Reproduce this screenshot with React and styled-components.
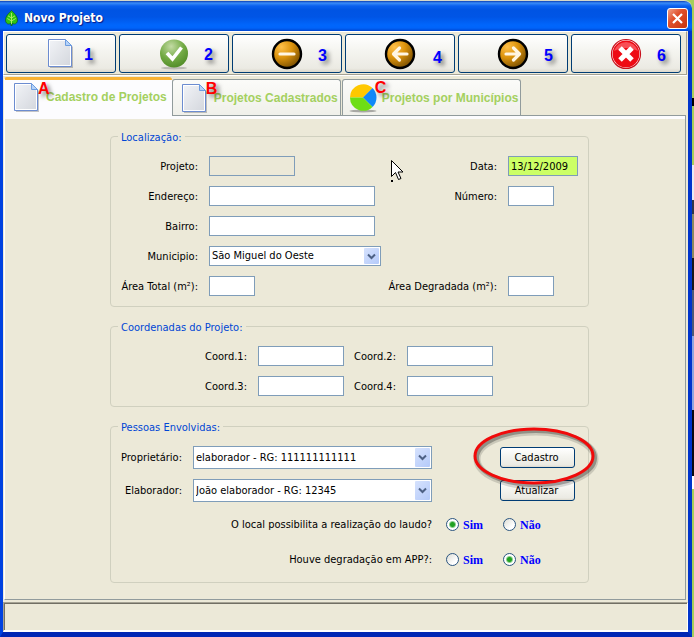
import React, { useState } from "react";
import styled, { createGlobalStyle, css } from "styled-components";

const color = {
  face: "#ece9d8",
  line: "#919b9c",
  group: "#d0d0bf",
  field: "#7f9db9",
  frame: "#0042e0",
  button: "#003c74",
};

const GlobalStyle = createGlobalStyle`
  *, *::before, *::after { box-sizing: border-box; }
  body {
    margin: 0;
    font: 11px/14px "DejaVu Sans Condensed", "DejaVu Sans", sans-serif;
    color: #000;
  }
  button, input, select { font: inherit; color: inherit; }
`;

const Desktop = styled.div`
  display: flex;
  min-height: 100vh;
  padding-right: 2px;
  background: linear-gradient(
    #a4cf5c 0 98px, #000 98px 106px, #a4cf5c 106px 165px, #e8ecf4 165px 200px,
    #30364a 200px 214px, #8a8a60 214px 258px, #17181c 258px 290px,
    #4c5a78 290px 336px, #8ea6e0 336px 410px, #0a0a12 410px 476px,
    #fff 476px 489px, #a4cf5c 489px
  );
`;

const Window = styled.div`
  flex: 1;
  min-width: 0;
  display: flex;
  flex-direction: column;
`;

const TitleBar = styled.header`
  display: flex;
  align-items: center;
  height: 31px;
  padding: 4px 4px 0 5px;
  border-top: 1px solid #d6d8c8;
  border-radius: 0 8px 0 0;
  background: linear-gradient(
    #0a3fb5 0, #3a8cf8 2px, #0a60ee 5px, #0054e3 9px, #0055e6 16px,
    #0066fc 24px, #0064fa 27px, #0046d0 30px
  );
`;

const Title = styled.h1`
  flex: 1;
  margin: 0 0 0 6px;
  font-size: 12px;
  line-height: 16px;
  font-weight: 700;
  color: #fff;
  text-shadow: 1px 1px 1px #0a1883;
`;

const CloseButton = styled.button`
  display: grid;
  place-items: center;
  width: 21px;
  height: 21px;
  padding: 0;
  border: 1px solid #fff;
  border-radius: 3px;
  background: linear-gradient(135deg, #f0a088, #e0502c 40%, #c8340c);
`;

const Body = styled.main`
  flex: 1;
  display: flex;
  flex-direction: column;
  border: solid ${color.frame};
  border-width: 0 4px 5px 3px;
  border-right-color: #0034cc;
  border-bottom-color: #0026b4;
  background: ${color.face};
`;

const Toolbar = styled.div`
  display: grid;
  grid-template-columns: repeat(6, 1fr);
  gap: 3px;
  padding: 2px 5px 1px 2px;
  border: 1px solid #fff;
  border-bottom: 1px solid #a5a294;
  border-right: 1px solid #a5a294;
  box-shadow: 0 1px #fff;
  margin: 0 1px 1px 0;
`;

const xpButton = css`
  border: 1px solid ${color.button};
  border-radius: 3px;
  background: linear-gradient(#fff, #f4f4ef 45%, #ebeae3 90%, #dcd8cc);
`;

const ToolButton = styled.button`
  ${xpButton}
  position: relative;
  display: grid;
  place-items: center;
  height: 39px;
  padding: 0;
`;

const Mark = styled.span`
  position: absolute;
  left: ${(p) => p.$left}px;
  top: ${(p) => p.$top}px;
  font: 700 16px/16px "Liberation Sans", Arial, sans-serif;
  color: ${(p) => (p.$letter ? "#f00" : "#00f")};
  text-shadow: 3px 3px 4px rgba(0, 0, 0, 0.5);
  pointer-events: none;
`;

const Tabs = styled.div`
  display: flex;
  align-items: flex-end;
  height: 39px;
  padding-left: 1px;
`;

const Tab = styled.button`
  position: relative;
  display: flex;
  align-items: center;
  gap: 5px;
  height: 36px;
  margin-right: 1px;
  padding: 1px 2px 0 ${(p) => p.$inset}px;
  border: 1px solid ${color.line};
  border-bottom: 0;
  border-radius: 3px 3px 0 0;
  background: linear-gradient(#fbfbf9, #f0f0ea);
  font: 700 12px/14px "Liberation Sans", Arial, sans-serif;
  color: #a4d060;
  white-space: nowrap;
  ${(p) =>
    p.$active &&
    css`
      z-index: 1;
      height: 39px;
      margin: 0 0 -1px;
      padding: 0 5px 2px ${p.$inset}px;
      border-top: 3px solid #f9b233;
      border-left-color: #fff;
      border-right-width: 0;
      background: #fcfcfe;
    `}
`;

const Pane = styled.form`
  flex: 1;
  display: flex;
  flex-direction: column;
  gap: 12px;
  margin: 0 2px 0 1px;
  padding: 13px 96px 16px 105px;
  border: 1px solid ${color.line};
  border-left-color: #fff;
  box-shadow: inset 0 3px #fcfcfe;
`;

const Group = styled.fieldset`
  min-width: 0;
  margin: 0;
  padding: 13px 0 10px;
  border: 1px solid ${color.group};
  border-radius: 4px;
`;

const Legend = styled.legend`
  height: 14px;
  margin-left: 7px;
  padding: 0 3px;
  line-height: 18px;
  color: #0046d5;
`;

const Fields = styled.div`
  position: relative;
  display: grid;
  grid-template-columns: ${(p) => p.$columns};
  grid-auto-rows: ${(p) => p.$row || 20}px;
  gap: 10px 11px;
  align-items: center;
  padding-right: ${(p) => p.$right || 0}px;

  & + & { margin-top: 10px; }
`;

const Label = styled.label`
  grid-column: ${(p) => p.$column || "auto"};
  justify-self: end;
  padding-top: 1px;
  white-space: nowrap;
`;

const TextInput = styled.input`
  width: ${(p) => p.$width}px;
  height: 20px;
  padding: 1px 2px 0;
  border: 1px solid ${color.field};
  border-radius: 0;
  outline: 0;
  background: ${(p) => p.$fill || "#fff"};
`;

const SelectBox = styled.div`
  position: relative;
  display: grid;
  height: 100%;
`;

const Select = styled.select`
  appearance: none;
  min-width: 0;
  padding: 0 20px 0 2px;
  border: 1px solid ${color.field};
  border-radius: 0;
  background: #fff;
`;

const SelectArrow = styled.span`
  position: absolute;
  top: 2px;
  right: 2px;
  bottom: 2px;
  display: grid;
  place-items: center;
  width: 15px;
  border-radius: 1px;
  background: linear-gradient(135deg, #d6e2fd, #b4cafa);
  pointer-events: none;
`;

const PushButton = styled.button`
  ${xpButton}
  width: 75px;
  height: 21px;
  padding: 0 2px 0 0;
`;

const ButtonSpot = styled.div`
  position: relative;
  display: grid;
  justify-self: end;
`;

const Ring = styled.svg`
  position: absolute;
  left: -30px;
  top: -55px;
  overflow: visible;
  pointer-events: none;
`;

const Pointer = styled.svg`
  position: absolute;
  left: 280px;
  top: 4px;
  pointer-events: none;
`;

const Question = styled.span`
  grid-column: 1 / 3;
  justify-self: end;
  white-space: nowrap;
`;

const Choices = styled.div`
  display: flex;
  padding-left: 3px;
`;

const Choice = styled.label`
  display: flex;
  align-items: center;
  gap: 4px;
  width: 57px;
  font: 700 12px/14px "Liberation Serif", "Times New Roman", serif;
  color: #00f;
`;

const Radio = styled.input`
  appearance: none;
  flex: none;
  width: 13px;
  height: 13px;
  margin: 0;
  border: 1px solid #2b5580;
  border-radius: 50%;
  background: linear-gradient(135deg, #dcdcd4, #fff 70%);
  &:checked {
    background: radial-gradient(circle, #21a121 0 2px, #8fd08f 3px, #fff 4px);
  }
`;

const StatusBar = styled.footer`
  height: 30px;
  margin-top: 2px;
  border: 1px solid #a5a294;
  border-right: 1px solid #fff;
  border-bottom: 2px solid #fff;
  box-shadow: inset 1px 1px #716f64;
`;

const Leaf = () => (
  <svg width="13" height="16" viewBox="0 0 13 16" aria-hidden="true">
    <path d="M6.5 .5C9 3 12.500 6 12.500 10c0 2.500-1.500 4-3 4-1.300 0-2-.5-2.300-1v2.500H5.800V13c-.3.500-1 1-2.300 1-1.500 0-3-1.500-3-4C.5 6 4 3 6.500.5Z" fill="#2fc412" stroke="#0a5a1c" strokeWidth=".7" />
    <path d="M6.500 3v11M6.500 8 3 5.800M6.500 8 10 5.800M6.500 11 2.300 8.500M6.500 11l4.200-2.500" stroke="#b5f26a" fill="none" strokeWidth=".9" />
  </svg>
);

const DocIcon = () => (
  <svg width="28" height="31" viewBox="0 0 28 31" aria-hidden="true">
    <defs>
      <linearGradient id="doc" x1="0" y1="0" x2="1" y2="1">
        <stop offset="0" stopColor="#f2f4f8" />
        <stop offset="1" stopColor="#d3d6dc" />
      </linearGradient>
    </defs>
    <path d="M3 3h17l6 6v21H3z" fill="#000" opacity=".22" />
    <path d="M1.500 1.500h17l6 6v21h-23z" fill="url(#doc)" stroke="#6c8cd0" />
    <path d="M2.500 2.500h15.500M2.500 2.500v25h21V8" fill="none" stroke="#fff" />
    <path d="M18.500 1.500v6h6z" fill="#b4d2f8" stroke="#6c9ce0" />
  </svg>
);

const CheckIcon = () => (
  <svg width="30" height="32" viewBox="0 0 30 32" aria-hidden="true">
    <defs>
      <radialGradient id="green" cx=".4" cy=".25" r=".8">
        <stop offset="0" stopColor="#c3dba4" />
        <stop offset=".55" stopColor="#72aa44" />
        <stop offset="1" stopColor="#4f8a26" />
      </radialGradient>
    </defs>
    <ellipse cx="15" cy="30" rx="13" ry="1.500" fill="#000" opacity=".2" />
    <circle cx="15" cy="15.500" r="14" fill="url(#green)" />
    <path d="m8 15 5.500 6L22.500 9.500" fill="none" stroke="#fff" strokeWidth="3.600" />
  </svg>
);

const AmberIcon = ({ children }) => (
  <svg width="32" height="32" viewBox="0 0 32 32" aria-hidden="true">
    <defs>
      <radialGradient id="amber" cx=".3" cy=".25" r=".85">
        <stop offset="0" stopColor="#ffc04a" />
        <stop offset=".45" stopColor="#dc930c" />
        <stop offset="1" stopColor="#6f4800" />
      </radialGradient>
    </defs>
    <circle cx="16" cy="16" r="14" fill="url(#amber)" stroke="#000" strokeWidth="2.400" />
    <g fill="none" stroke="#fff6e4" strokeWidth="3.200" strokeLinecap="round" strokeLinejoin="round">
      {children}
    </g>
  </svg>
);

const CancelIcon = () => (
  <svg width="32" height="32" viewBox="0 0 32 32" aria-hidden="true">
    <circle cx="16" cy="16" r="14.500" fill="#fff" stroke="#c8101c" strokeWidth="1.200" />
    <circle cx="16" cy="16" r="13.400" fill="#ee0a14" />
    <path d="M4 13a12.500 12.500 0 0 1 24 0c-7-4-17-4-24 0Z" fill="#ff7c80" opacity=".6" />
    <path d="m10 10 12 12M22 10 10 22" stroke="#fff" strokeWidth="5" />
  </svg>
);

const PieIcon = () => (
  <svg width="28" height="30" viewBox="0 0 28 30" aria-hidden="true">
    <ellipse cx="14" cy="28" rx="13.500" ry="1.500" fill="#000" opacity=".3" />
    <path d="M14 14.500H1A13.300 13.300 0 0 1 23.500 5Z" fill="#ffc800" />
    <path d="M14 14.500 23.500 5a13.300 13.300 0 0 1 0 19Z" fill="#1188f8" />
    <path d="M14 14.500 23.500 24A13.300 13.300 0 0 1 1 14.500Z" fill="#6ede14" />
  </svg>
);

const tools = [
  { n: 1, name: "Novo", left: 77, top: 12, icon: <DocIcon /> },
  { n: 2, name: "Confirmar", left: 84, top: 12, icon: <CheckIcon /> },
  { n: 3, name: "Remover", left: 85, top: 13, icon: <AmberIcon><path d="M9 16h14" /></AmberIcon> },
  { n: 4, name: "Anterior", left: 87, top: 15, icon: <AmberIcon><path d="M23 16H10M15.500 10 9.500 16l6 6" /></AmberIcon> },
  { n: 5, name: "Próximo", left: 85, top: 13, icon: <AmberIcon><path d="M9 16h13M16.500 10l6 6-6 6" /></AmberIcon> },
  { n: 6, name: "Cancelar", left: 85, top: 13, icon: <CancelIcon /> },
];

const tabs = [
  { letter: "A", left: 33, top: 1, inset: 8, text: "Cadastro de Projetos", icon: <DocIcon /> },
  { letter: "B", left: 33, top: 1, inset: 8, text: "Projetos Cadastrados", icon: <DocIcon /> },
  { letter: "C", left: 32, top: 0, inset: 6, text: "Projetos por Municípios", icon: <PieIcon /> },
];

function Field({ id, label, column, ...rest }) {
  return (
    <>
      <Label htmlFor={id} $column={column}>{label}</Label>
      <TextInput id={id} type="text" {...rest} />
    </>
  );
}

function Combo({ id, label, value }) {
  return (
    <>
      <Label htmlFor={id} $column="1">{label}</Label>
      <SelectBox>
        <Select id={id} defaultValue={value}>
          <option>{value}</option>
        </Select>
        <SelectArrow aria-hidden="true">
          <svg width="9" height="7" viewBox="0 0 9 7">
            <path d="m1 1.500 3.500 3.500L8 1.500" fill="none" stroke="#4d6185" strokeWidth="2" />
          </svg>
        </SelectArrow>
      </SelectBox>
    </>
  );
}

function YesNo({ name, question, initial }) {
  const [value, setValue] = useState(initial);
  return (
    <>
      <Question id={name}>{question}</Question>
      <Choices role="radiogroup" aria-labelledby={name}>
        {["Sim", "Não"].map((option) => (
          <Choice key={option}>
            <Radio type="radio" name={name} checked={value === option} onChange={() => setValue(option)} />
            {option}
          </Choice>
        ))}
      </Choices>
    </>
  );
}

export default function App() {
  const [active, setActive] = useState("A");
  return (
    <Desktop>
      <GlobalStyle />
      <Window>
        <TitleBar>
          <Leaf />
          <Title>Novo Projeto</Title>
          <CloseButton aria-label="Fechar">
            <svg width="13" height="13" viewBox="0 0 13 13" aria-hidden="true">
              <path d="m2 2 9 9M11 2l-9 9" stroke="#fff" strokeWidth="2.200" />
            </svg>
          </CloseButton>
        </TitleBar>
        <Body>
          <Toolbar role="toolbar">
            {tools.map((t) => (
              <ToolButton key={t.n} aria-label={t.name}>
                {t.icon}
                <Mark $left={t.left} $top={t.top}>{t.n}</Mark>
              </ToolButton>
            ))}
          </Toolbar>
          <Tabs role="tablist">
            {tabs.map((t) => (
              <Tab
                key={t.letter}
                role="tab"
                aria-selected={active === t.letter}
                $active={active === t.letter}
                $inset={t.inset}
                onClick={() => setActive(t.letter)}
              >
                {t.icon}
                {t.text}
                <Mark $letter $left={t.left} $top={t.top}>{t.letter}</Mark>
              </Tab>
            ))}
          </Tabs>
          <Pane onSubmit={(e) => e.preventDefault()}>
            <Group>
              <Legend>Localização:</Legend>
              <Fields $columns="87px 172px minmax(0, 1fr) 70px" $right={10}>
                <Field id="projeto" label="Projeto:" $width={86} $fill={color.face} readOnly />
                <Field id="data" label="Data:" $width={70} $fill="#ccff66" defaultValue="13/12/2009" />
                <Field id="endereco" label="Endereço:" $width={166} />
                <Field id="numero" label="Número:" $width={46} />
                <Field id="bairro" label="Bairro:" $width={166} />
                <Combo id="municipio" label="Municipio:" value="São Miguel do Oeste" />
                <Field id="area-total" label="Área Total (m²):" column="1" $width={46} />
                <Field id="area-degradada" label="Área Degradada (m²):" $width={46} />
                <Pointer width="13" height="22" viewBox="0 0 13 22" aria-hidden="true">
                  <path d="M.5.500v16l4-4 3 7 2.500-1-3-6.500h5z" fill="#fff" stroke="#000" />
                  <path d="M0 20h2v2H0z" />
                </Pointer>
              </Fields>
            </Group>
            <Group>
              <Legend>Coordenadas do Projeto:</Legend>
              <Fields $columns="136px 86px 41px 86px">
                <Field id="coord1" label="Coord.1:" $width={86} />
                <Field id="coord2" label="Coord.2:" $width={86} />
                <Field id="coord3" label="Coord.3:" $width={86} />
                <Field id="coord4" label="Coord.4:" $width={86} />
              </Fields>
            </Group>
            <Group>
              <Legend>Pessoas Envolvidas:</Legend>
              <Fields $columns="71px 239px 1fr" $row={23} $right={13}>
                <Combo id="proprietario" label="Proprietário:" value="elaborador - RG: 111111111111" />
                <ButtonSpot>
                  <PushButton type="button">Cadastro</PushButton>
                </ButtonSpot>
                <Combo id="elaborador" label="Elaborador:" value="João elaborador - RG: 12345" />
                <ButtonSpot>
                  <PushButton type="button">Atualizar</PushButton>
                  <Ring width="128" height="64" viewBox="0 0 128 64" aria-hidden="true">
                    <g fill="none">
                      <ellipse cx="66" cy="34" rx="59" ry="27" stroke="#000" opacity=".14" strokeWidth="7" />
                      <ellipse cx="66" cy="33" rx="59" ry="27" stroke="#000" opacity=".28" strokeWidth="4" />
                      <ellipse cx="64" cy="31" rx="59" ry="27" stroke="#f00a0a" strokeWidth="3" />
                    </g>
                  </Ring>
                </ButtonSpot>
              </Fields>
              <Fields $columns="71px 239px 1fr" $row={25}>
                <YesNo name="laudo" question="O local possibilita a realização do laudo?" initial="Sim" />
                <YesNo name="app" question="Houve degradação em APP?:" initial="Não" />
              </Fields>
            </Group>
          </Pane>
          <StatusBar />
        </Body>
      </Window>
    </Desktop>
  );
}
